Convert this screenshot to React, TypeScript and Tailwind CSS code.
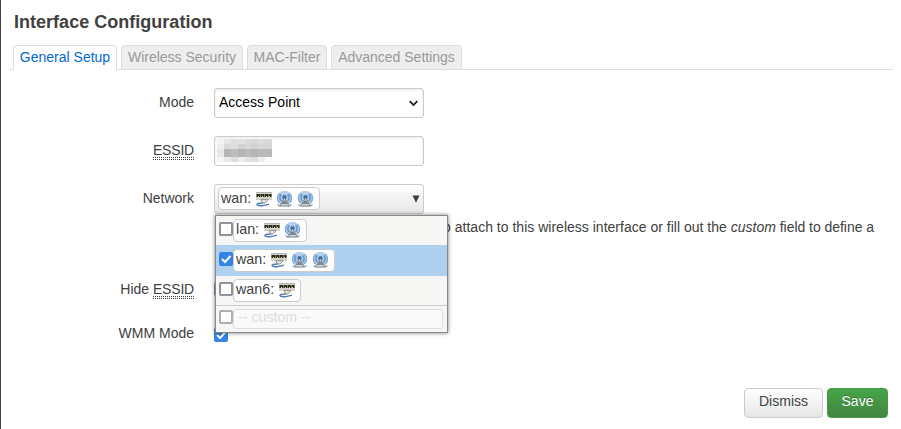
import React from "react";

const EthIcon = () => (
  <svg width="17" height="17" viewBox="0 0 17 17" className="block shrink-0">
    <rect x="1" y="1" width="16" height="8" fill="#d3d3cd" />
    <rect x="1" y="1" width="16" height="1" fill="#b4b4ae" />
    <rect x="1" y="3" width="16" height="3" fill="#77776a" />
    <path d="M2 3h3v3H2zM6 3h3v3H6zM10 3h3v3h-3zM14 3h2v3h-2z" fill="#2b2b22" />
    <path d="M3 5h1v1H3zM7 5h1v1H7zM11 5h1v1h-1zM14 5h1v1h-1z" fill="#f0e36a" />
    <path d="M6 8.5h7l-1.5 2.2-2.5 1.6-2-.8z" fill="#e3e2d8" stroke="#8b8a80" strokeWidth="0.9" />
    <path d="M8 11.6C6 12.8 3.4 11.8 2 13.2c.2 1.6 2.4 1.7 5 1.5 2.4-.1 4.4-.9 7-1.6" fill="none" stroke="#4f7fbd" strokeWidth="1.5" />
  </svg>
);

const WifiIcon = () => (
  <svg width="17" height="17" viewBox="0 0 17 17" className="block shrink-0">
    <circle cx="8.5" cy="7" r="7.3" fill="#b4d0ec" />
    <path d="M3.6 12A6.6 6.6 0 0 1 3.6 2.2M13.4 12a6.6 6.6 0 0 0 0-9.8" fill="none" stroke="#7fa9d8" strokeWidth="1.4" />
    <path d="M5.4 10A4.3 4.3 0 0 1 5.4 3.4M11.6 10a4.3 4.3 0 0 0 0-6.6" fill="none" stroke="#5f8fc8" strokeWidth="1.4" />
    <circle cx="8.5" cy="6.2" r="2.2" fill="#41719f" />
    <path d="M8.5 6.5L2.8 15.4h11.4z" fill="#d0d6d9" />
    <path d="M8.5 6.5L4 14.6M8.5 6.5l4.5 8.1M7 10.2h3M5.6 12.4h5.8M7 10.4l4.6 2.2M10 10.4l-4.6 2.2" fill="none" stroke="#6c7981" strokeWidth="0.9" />
    <path d="M1.6 13.6l2 1.4h9.8l2-1.4" fill="none" stroke="#808b92" strokeWidth="1.2" />
  </svg>
);

function Badge({ name, icons, width }: { name: string; icons: string; width: string }) {
  return (
    <span className={`flex h-[23px] shrink-0 items-center rounded-[4px] border border-[#ccc] bg-white pl-[2px] ${width}`}>
      <span className="mr-1 pb-[2px] text-[14.3px]">{name}:</span>
      <span className="flex gap-1 pt-px">
        {icons.split("").map((kind, i) => (kind === "e" ? <EthIcon key={i} /> : <WifiIcon key={i} />))}
      </span>
    </span>
  );
}

function Check({ on = false, faded = false }: { on?: boolean; faded?: boolean }) {
  return (
    <span
      className={`flex size-[14px] shrink-0 items-center justify-center rounded-[2px] ${
        on ? "bg-[#3584e4]" : "border-2 border-[#8f8f9d] bg-white"
      } ${faded ? "opacity-70" : ""}`}
    >
      {on && (
        <svg width="14" height="14" viewBox="0 0 14 14">
          <path d="M3 7l3 3 5.5-6" fill="none" stroke="#fff" strokeWidth="2" />
        </svg>
      )}
    </span>
  );
}

const Essid = () => (
  <span className="relative tracking-[-0.2px]">
    ESSID
    <span className="absolute inset-x-0 top-[15px] h-[3px] border-y border-dotted border-[#404040]" />
  </span>
);

const shades = [
  ["#f3f3f3", "#e6e6e6", "#dddddd", "#e1e1e1", "#dadada", "#d7d7d7", "#dcdcdc", "#d8d8d8"],
  ["#eeeeee", "#dadada", "#dedede", "#d2d2d2", "#d7d7d7", "#d2d2d2", "#d7d7d7", "#d5d5d5"],
  ["#e7e7e7", "#b5b5b5", "#bdbdbd", "#b4b4b4", "#bdbdbd", "#b5b5b5", "#b9b9b9", "#b8b8b8"],
  ["#f4f4f4", "#e8e8e8", "#dedede", "#eeeeee", "#e2e2e2", "#dddddd", "#eeeeee", "#fafafa"],
];

const tabs = [
  ["General Setup", "w-[104px]"],
  ["Wireless Security", "w-[122px]"],
  ["MAC-Filter", "w-[80px]"],
  ["Advanced Settings", "w-[131px]"],
];

function Row({ label, className = "", children }: { label: React.ReactNode; className?: string; children: React.ReactNode }) {
  return (
    <div className={`flex items-start ${className}`}>
      <div className="mr-5 w-[185px] shrink-0 pt-[5px] text-right leading-[18px]">{label}</div>
      {children}
    </div>
  );
}

export default function App() {
  return (
    <main className="h-[429px] w-[901px] overflow-hidden border-l border-[#444] bg-white pl-2 font-['Liberation_Sans',Arial,sans-serif] text-[14px] leading-[18px] text-[#404040]">
      <h1 className="h-[45px] pt-[11px] pl-[5px] text-[18px] leading-[22px] font-bold tracking-[0.02px]">Interface Configuration</h1>
      <nav className="flex h-[25px] w-[884px] gap-1 border-b border-[#ddd] pl-1">
        {tabs.map(([name, width], i) => (
          <div
            key={name}
            className={`h-[25px] shrink-0 rounded-t-[4px] border border-[#ddd] pt-[2px] text-center whitespace-nowrap ${width} ${
              i === 0 ? "border-b-white bg-white text-[#0069d6]" : "bg-[#eee] text-[#999]"
            }`}
          >
            {name}
          </div>
        ))}
      </nav>

      <Row label="Mode" className="mt-[18px] h-12">
        <div className="flex h-[30px] w-[210px] items-center justify-between rounded-[3px] border border-[#ccc] pr-[5px] pb-[2px] pl-1 text-black shadow-[inset_0_1px_3px_rgba(0,0,0,0.1)]">
          Access Point
          <svg width="9" height="7" viewBox="0 0 9 7" className="mt-[2px]">
            <path d="M.7 1.2l3.8 3.8 3.8-3.8" fill="none" stroke="#111" strokeWidth="1.7" />
          </svg>
        </div>
      </Row>
      <Row label={<Essid />} className="h-12">
        <div className="h-[30px] w-[210px] rounded-[3px] border border-[#ccc] pt-[2px] pl-[2px] shadow-[inset_0_1px_3px_rgba(0,0,0,0.1)]">
          <div className="flex w-[55px] flex-col">
            {shades.map((line, y) => (
              <div key={y} className={y === 2 ? "flex h-2" : "flex h-[5px]"}>
                {line.map((color, x) => (
                  <span key={x} className="flex-1" style={{ background: color }} />
                ))}
              </div>
            ))}
          </div>
        </div>
      </Row>
      <Row label="Network" className="h-[91px]">
        <div className="relative w-[670px]">
          <div className="flex h-[30px] w-[210px] items-center rounded-[3px] border border-[#ccc] bg-gradient-to-b from-white to-[#e6e6e6] pb-px pl-[3px]">
            <Badge name="wan" icons="eww" width="w-[102px]" />
            <span className="mr-[3px] ml-auto">
              <svg width="8" height="8" viewBox="0 0 8 8">
                <path d="M.5.5h7L4 7.8z" fill="#404040" />
              </svg>
            </span>
          </div>
          <p className="mt-1 w-[660px] text-right whitespace-nowrap">
            <span className="tracking-[0.01px]">network(s) you want to attach to this wireless interface or fill out the </span>
            <em>custom</em>
            <span className="tracking-[-0.04px]"> field to define a</span>
          </p>
          <div className="absolute top-[31px] left-px h-[118px] w-[233px] border border-[#888] bg-[#f6f6f5] shadow-[0_0_4px_rgba(0,0,0,0.55)]">
            <div className="flex h-[29px] items-center pb-px pl-[3px]">
              <span className="-mt-[2px]"><Check /></span>
              <Badge name="lan" icons="ew" width="w-[74px]" />
            </div>
            <div className="flex h-[31px] items-center bg-[#b0d0f0] pb-px pl-[3px]">
              <span className="-mt-[2px]"><Check on /></span>
              <Badge name="wan" icons="eww" width="w-[102px]" />
            </div>
            <div className="flex h-[30px] items-center border-b border-[#ccc] pb-px pl-[3px]">
              <span className="-mt-[2px]"><Check /></span>
              <Badge name="wan6" icons="e" width="w-[68px]" />
            </div>
            <div className="flex h-[26px] items-center pl-[3px]">
              <span className="-mt-1"><Check faded /></span>
              <span className="h-5 w-[210px] rounded-[3px] border border-[#ddd] bg-[#fafafa] pl-1 text-[14.2px] leading-[15px] text-[#ddd]">-- custom --</span>
            </div>
          </div>
        </div>
      </Row>
      <Row label={<>Hide <Essid /></>} className="h-[44px]">
        <div className="pt-[7px]"><Check /></div>
      </Row>
      <Row label="WMM Mode" className="h-[69px]">
        <div className="pt-[9px]"><Check on /></div>
      </Row>
      <div className="flex w-[879px] justify-end gap-1">
        <button className="h-[30px] w-[79px] rounded-[4px] border border-[#ccc] bg-gradient-to-b from-white to-[#e6e6e6] pb-1">Dismiss</button>
        <button className="h-[30px] w-[61px] rounded-[4px] border border-[#449b47] bg-gradient-to-b from-[#46a546] to-[#438643] pb-1 text-white [text-shadow:0_-1px_0_rgba(0,0,0,0.25)]">Save</button>
      </div>
    </main>
  );
}
